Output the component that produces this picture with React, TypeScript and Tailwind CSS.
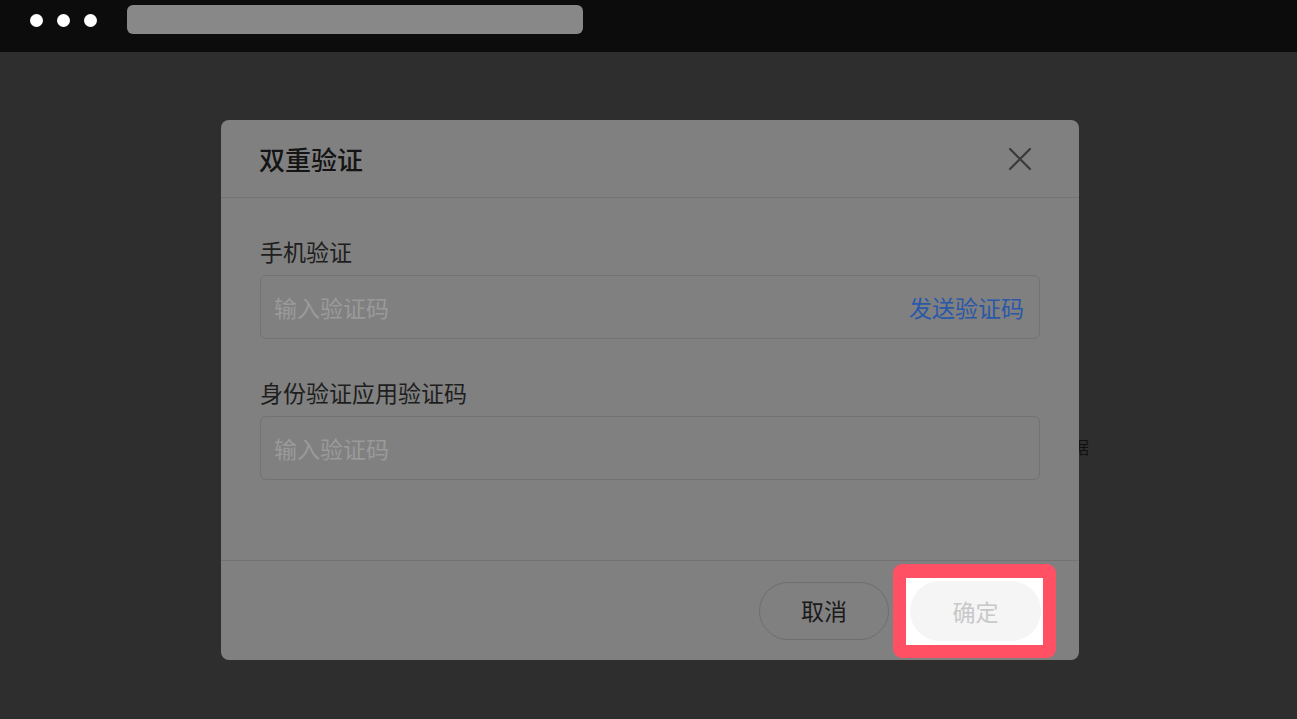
const font = { fontFamily: '"Noto Sans CJK SC", "Noto Sans", sans-serif' }

function Field({ label, action }: { label: string; action?: string }) {
  return (
    <div className="flex flex-col">
      <div className="h-[26px] text-[23px] leading-[24px] text-[#1e1e1e]">{label}</div>
      <div className="mt-[10px] flex h-[64px] items-center justify-between rounded-[6px] border border-[#737373] pl-[13px] pr-[15px]">
        <span className="text-[23px] text-[#9a9a9a]">输入验证码</span>
        {action && <span className="text-[23px] text-[#2a58a8]">{action}</span>}
      </div>
    </div>
  )
}

export default function App() {
  return (
    <div className="flex h-[719px] w-[1297px] flex-col overflow-hidden bg-[#2e2e2e]" style={font}>
      {/* top chrome */}
      <div className="flex h-[52px] items-start bg-[#0c0c0c] pt-[5px]">
        <div className="flex items-center gap-[14px] pl-[30px] pt-[9px]">
          <span className="h-[13px] w-[13px] rounded-full bg-white" />
          <span className="h-[13px] w-[13px] rounded-full bg-white" />
          <span className="h-[13px] w-[13px] rounded-full bg-white" />
        </div>
        <div className="ml-[30px] h-[29px] w-[456px] rounded-[6px] bg-[#888888]" />
      </div>

      {/* dimmed page */}
      <div className="relative flex-1">
        <span className="absolute left-[1072px] top-[386px] text-[17px] leading-none text-[#111]">据</span>
        <div className="relative z-10 ml-[221px] mt-[68px] flex h-[540px] w-[858px] flex-col rounded-[8px] bg-[#808080]">
          <div className="flex h-[78px] items-center justify-between border-b border-[#737373] pl-[38px] pr-[48px]">
            <h2 className="text-[26px] font-medium text-[#141414]">双重验证</h2>
            <svg width="22" height="22" viewBox="0 0 22 22" className="text-[#3a3a3a]">
              <path d="M1 1 L21 21 M21 1 L1 21" stroke="currentColor" strokeWidth="2.2" strokeLinecap="round" />
            </svg>
          </div>

          <div className="flex h-[363px] flex-col gap-[41px] border-b border-[#737373] px-[39px] pt-[41px]">
            <Field label="手机验证" action="发送验证码" />
            <Field label="身份验证应用验证码" />
          </div>

          <div className="flex flex-1 items-center justify-end pr-[23px]">
            <button className="flex h-[58px] w-[130px] items-center justify-center rounded-full border border-[#6e6e6e] text-[23px] text-[#1a1a1a]">
              取消
            </button>
            <div className="ml-[4px] rounded-[9px] bg-[#ff5064] p-[13px] pt-[14px]">
              <div className="flex h-[67px] w-[137px] items-center bg-white pl-[4px]">
                <div className="flex h-[60px] w-[131px] items-center justify-center rounded-full bg-[#f5f5f5] text-[23px] text-[#c8c8c8]">
                  确定
                </div>
              </div>
            </div>
          </div>
        </div>
      </div>
    </div>
  )
}
